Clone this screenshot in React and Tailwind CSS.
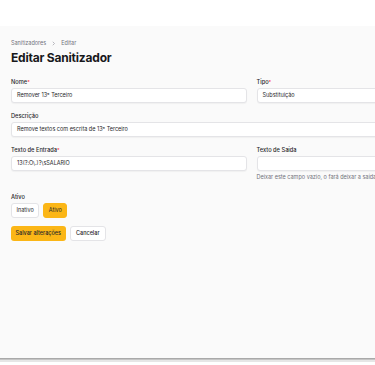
const Label = ({ children, required }) => (
  <p className="text-[5.7px] leading-[8px] font-medium text-[#27272a] mb-[2px]">
    {children}
    {required && <span className="text-red-500 align-top text-[5px]">*</span>}
  </p>
);

const Input = ({ value }) => (
  <div className="h-[15px] bg-white border border-[#e4e4e7] rounded-[3px] shadow-[0_1px_1px_rgba(0,0,0,0.04)] flex items-center px-[5px] text-[5.5px] text-[#27272a]">
    {value}
  </div>
);

export default function App() {
  return (
    <div className="w-[375px] h-[365px] overflow-hidden bg-white font-['Inter',sans-serif]">
      <div className="h-[26px] bg-white" />
      <div className="h-[332px] bg-[#fafafa] pl-[11px] pt-[14px]">
        <div className="flex items-center gap-[5px] text-[5.5px] leading-[7px] text-[#71717a]">
          <span>Sanitizadores</span>
          <svg width="5" height="5" viewBox="0 0 10 10" fill="none" stroke="#a1a1aa" strokeWidth="1.5">
            <path d="M3.5 1.5 L7 5 L3.5 8.5" />
          </svg>
          <span>Editar</span>
        </div>
        <h1 className="mt-[4px] text-[12px] leading-[14px] font-bold text-[#18181b] tracking-[-0.2px]">
          Editar Sanitizador
        </h1>

        <div className="mt-[13px] w-[481px] grid grid-cols-2 gap-x-[10px] gap-y-[9px]">
          <div>
            <Label required>Nome</Label>
            <Input value="Remover 13º Terceiro" />
          </div>
          <div>
            <Label required>Tipo</Label>
            <Input value="Substituição" />
          </div>
          <div className="col-span-2">
            <Label>Descrição</Label>
            <Input value="Remove textos com escrita de 13º Terceiro" />
          </div>
          <div>
            <Label required>Texto de Entrada</Label>
            <Input value="13(?:O\.)?\sSALARIO" />
          </div>
          <div>
            <Label>Texto de Saída</Label>
            <Input value="" />
            <p className="mt-[3px] text-[5.5px] leading-[7px] text-[#71717a]">
              Deixar este campo vazio, o fará deixar a saída em branco
            </p>
          </div>
        </div>

        <div className="mt-[12px]">
          <Label>Ativo</Label>
          <div className="flex gap-[4px]">
            <button className="h-[15px] px-[4.5px] bg-white border border-[#e4e4e7] rounded-[3px] text-[5.5px] text-[#27272a]">
              Inativo
            </button>
            <button className="h-[15px] px-[4.5px] bg-[#fbb616] border border-[#fbb616] rounded-[3px] text-[5.5px] text-[#27272a]">
              Ativo
            </button>
          </div>
        </div>

        <div className="mt-[8px] flex gap-[4px]">
          <button className="h-[15px] px-[4.5px] bg-[#fbb616] rounded-[3px] text-[5.5px] font-medium text-[#27272a]">
            Salvar alterações
          </button>
          <button className="h-[15px] px-[5.5px] bg-white border border-[#e4e4e7] rounded-[3px] text-[5.5px] font-medium text-[#27272a]">
            Cancelar
          </button>
        </div>
      </div>
      <div className="h-[1px] bg-[#a9a9a9]" />
      <div className="h-[1px] bg-[#c4c4c4]" />
      <div className="h-[2px] bg-[#e6e6e6]" />
    </div>
  );
}
